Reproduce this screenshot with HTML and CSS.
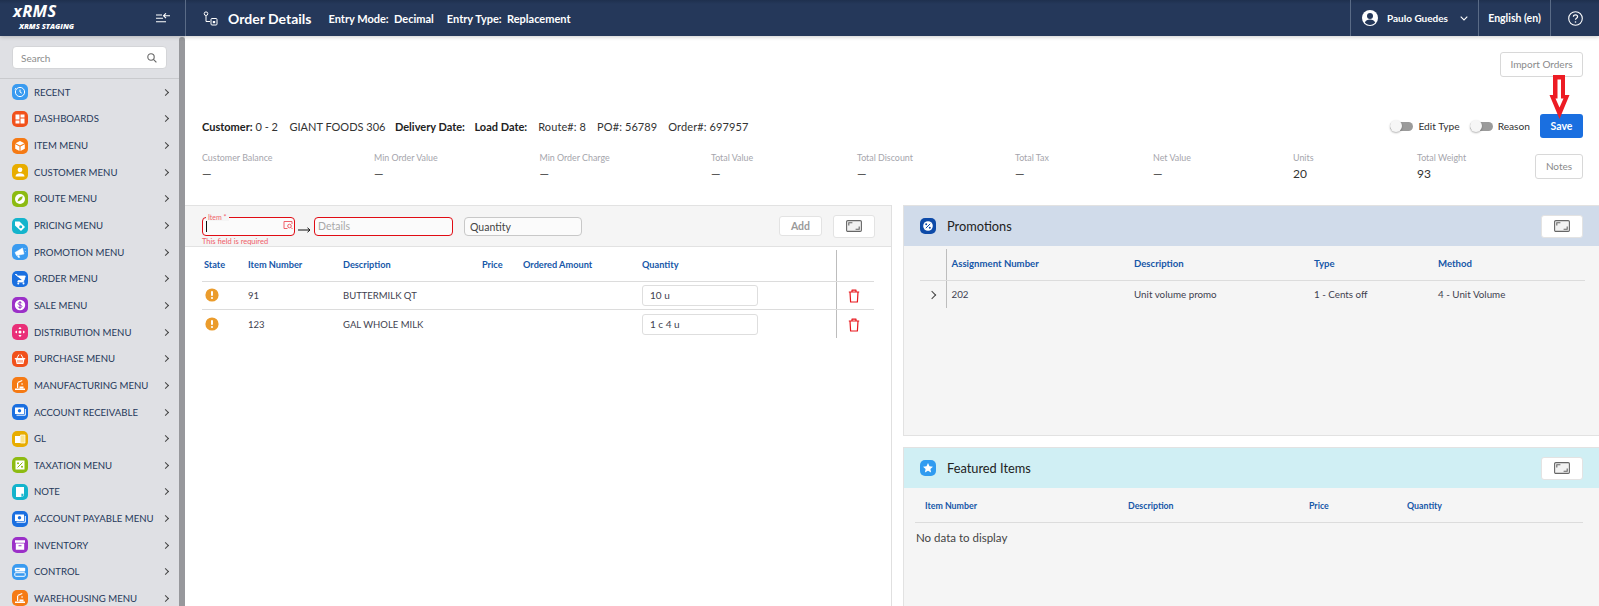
FILE: index.html
```html
<!DOCTYPE html>
<html lang="en">
<head>
<meta charset="utf-8">
<title>Order Details</title>
<link rel="stylesheet" href="styles.css">
</head>
<body>
<svg class="defs" width="0" height="0" aria-hidden="true">
  <symbol id="i-clock" viewBox="0 0 16 16"><circle cx="8" cy="8" r="4.6" fill="none" stroke="#fff" stroke-width="1"/><path d="M8 5.6V8l1.8 1.2M3 5.5 4 4" fill="none" stroke="#fff" stroke-width="1"/></symbol>
  <symbol id="i-dash" viewBox="0 0 16 16"><path d="M3.5 3.5h4v5h-4zM8.500 3.500h4v3h-4zM8.500 7.500h4v5h-4zM3.500 9.500h4v3h-4z" fill="#fff"/></symbol>
  <symbol id="i-box" viewBox="0 0 16 16"><path d="M8 3l4.500 2.300L8 7.600 3.500 5.300zM3.200 6.200l4.300 2.200V13l-4.300-2.300zM12.800 6.200 8.500 8.400V13l4.300-2.300z" fill="#fff"/></symbol>
  <symbol id="i-user" viewBox="0 0 16 16"><circle cx="8" cy="5.800" r="2.400" fill="#fff"/><path d="M3.500 12.500c0-2.400 2-3.300 4.500-3.300s4.500.9 4.500 3.300z" fill="#fff"/></symbol>
  <symbol id="i-route" viewBox="0 0 16 16"><circle cx="8" cy="8" r="5" fill="#fff"/><path d="M5.500 10.500C6 7 8 5.700 10.700 5.300 10.400 8 9 10 5.500 10.500z" fill="#8dbb12"/></symbol>
  <symbol id="i-tag" viewBox="0 0 16 16"><path d="M3 3.500h4.500l5.500 5.500-4 4-6-5.500z" fill="#fff"/><circle cx="8.700" cy="8.800" r="1.500" fill="#14b4cc"/></symbol>
  <symbol id="i-horn" viewBox="0 0 16 16"><path d="M3 8.500 10.500 4l1.500 6-7.500 1.500zM5.500 12l1.500-.5.7 2H6.300zM12.500 5l1-1M13 7.500h1" fill="#fff" stroke="#fff" stroke-width=".5"/></symbol>
  <symbol id="i-cart" viewBox="0 0 16 16"><path d="M3 3.500h1.800l.5 1.500h8l-1.300 4.500H6.200L5.700 11h6.600" fill="#fff" stroke="#fff" stroke-width=".8"/><circle cx="6.300" cy="12.600" r="1" fill="#fff"/><circle cx="11.500" cy="12.600" r="1" fill="#fff"/></symbol>
  <symbol id="i-dist" viewBox="0 0 16 16"><circle cx="8" cy="8" r="1.500" fill="#fff"/><path d="M8 2.800 9.600 5H6.400zM8 13.200 6.400 11h3.200zM2.800 8 5 6.400v3.200zM13.200 8 11 9.600V6.400z" fill="#fff"/></symbol>
  <symbol id="i-basket" viewBox="0 0 16 16"><path d="M2.800 7h10.400v1.300h-.8l-1 4.700H4.600l-1-4.700h-.8z" fill="#fff"/><path d="M5 7l2-3.500M11 7 9 3.500" stroke="#fff" stroke-width="1" fill="none"/><path d="M6 9v2.700M8 9v2.700M10 9v2.700" stroke="#f1511b" stroke-width=".8"/></symbol>
  <symbol id="i-mfg" viewBox="0 0 16 16"><path d="M3 13v-1.600h10V13zM5 11V6h1.200v5zM5.300 5 10 3l.5 1-4.600 2zM10 4.200v2.300M9.200 6.500h1.800v1H9.200z" fill="#fff"/><path d="M7.500 9.500h4v1.900h-4z" fill="#fff"/></symbol>
  <symbol id="i-bill" viewBox="0 0 16 16"><path d="M3 3.500h9v6.500H3z" fill="#fff"/><circle cx="7.500" cy="6.700" r="1.700" fill="#1a6fe0"/><path d="M13.300 5v6.200H4.500" fill="none" stroke="#fff"/></symbol>
  <symbol id="i-book" viewBox="0 0 16 16"><path d="M3 5h5v7H3z" fill="#fff"/><path d="M8.500 4h4.500v8H8.500z" fill="#fbe58c" stroke="#fff" stroke-width=".7"/></symbol>
  <symbol id="i-note" viewBox="0 0 16 16"><path d="M4 3h8v6.500L9 13H4z" fill="#fff"/><circle cx="10.300" cy="11" r="1.400" fill="#14b4cc" stroke="#fff" stroke-width=".5"/></symbol>
  <symbol id="i-inv" viewBox="0 0 16 16"><path d="M3 3.300h10v2.400H3zM3.800 6.500h8.400v6.200H3.800z" fill="#fff"/><path d="M6.500 8.200h3v1h-3z" fill="#9b30c8"/></symbol>
  <symbol id="i-ctrl" viewBox="0 0 16 16"><rect x="2.800" y="3.800" width="10.400" height="3.600" rx="1" fill="#fff"/><rect x="2.800" y="8.700" width="10.400" height="3.600" rx="1" fill="none" stroke="#fff"/><path d="M4.500 5.600h3" stroke="#3a9bf0"/></symbol>
  <symbol id="i-expand" viewBox="0 0 16 12"><rect x=".6" y=".6" width="14.800" height="10.800" rx="1.200" fill="#f2f2f2" stroke="#666" stroke-width="1.100"/><path d="M2.800 5.600V2.800h3.600M13.200 6.400v2.800H9.600" fill="none" stroke="#666" stroke-width="1.100"/></symbol>
  <symbol id="i-trash" viewBox="0 0 12 14"><path d="M.8 3h10.400M4 3V1.200h4V3M2 3l.6 10h6.800L10 3" fill="none" stroke="#e8161c" stroke-width="1.200" stroke-linejoin="round"/></symbol>
  <symbol id="i-warn" viewBox="0 0 14 14"><circle cx="7" cy="7" r="6.600" fill="#eb9c2c"/><rect x="6" y="3" width="2" height="5" rx=".9" fill="#fff"/><circle cx="7" cy="10" r="1.100" fill="#fff"/></symbol>
</svg>

<div class="app">
  <header class="topbar">
    <div class="brand">
      <div class="brand-text">
        <span class="brand-name">xRMS</span>
        <span class="brand-sub">XRMS STAGING</span>
      </div>
      <svg class="collapse" width="16" height="10" viewBox="0 0 16 10"><path d="M1 2h6M1 5.300h7M1 8.700h10M15 2.700H8.500M11 .3 8.500 2.700 11 5.100" fill="none" stroke="#fff" stroke-width="1.100"/></svg>
    </div>
    <div class="title-area">
      <svg class="order-icon" width="15" height="15" viewBox="0 0 15 15"><circle cx="3" cy="2.700" r="1.800" fill="none" stroke="#fff"/><path d="M3 4.800v5.700h4" fill="none" stroke="#fff"/><rect x="8" y="7.500" width="6" height="6.500" rx="1" fill="none" stroke="#fff"/><path d="M9.800 10h2.400v2.200H9.800z" fill="#fff"/></svg>
      <h1 class="page-title">Order Details</h1>
      <span class="entry">Entry Mode: &nbsp;Decimal</span>
      <span class="entry">Entry Type: &nbsp;Replacement</span>
    </div>
    <div class="user">
      <svg width="16" height="16" viewBox="0 0 16 16"><circle cx="8" cy="8" r="8" fill="#fff"/><circle cx="8" cy="6" r="3" fill="#25385a"/><path d="M2.800 12.500c.8-2 2.800-3 5.200-3s4.400 1 5.200 3C12 14 10 15 8 15s-4-1-5.200-2.500z" fill="#25385a"/></svg>
      <span class="user-name">Paulo Guedes</span>
      <svg width="8" height="5" viewBox="0 0 8 5"><path d="M.7.700 4 4l3.300-3.300" fill="none" stroke="#fff" stroke-width="1.100"/></svg>
    </div>
    <div class="lang">English (en)</div>
    <div class="help">
      <svg width="15" height="15" viewBox="0 0 15 15"><circle cx="7.500" cy="7.500" r="6.800" fill="none" stroke="#fff" stroke-width="1.100"/><path d="M5.400 5.800c0-1.300 1-2 2.100-2s2.100.8 2.100 1.900c0 1.600-2.100 1.600-2.100 3.100" fill="none" stroke="#fff" stroke-width="1.200"/><circle cx="7.500" cy="11" r=".8" fill="#fff"/></svg>
    </div>
  </header>

  <div class="workspace">
    <aside class="sidebar">
      <div class="side-inner">
        <div class="search-wrap">
          <div class="search">
            <span class="search-text">Search</span>
            <svg width="10" height="10" viewBox="0 0 10 10"><circle cx="4" cy="4" r="3.200" fill="none" stroke="#666" stroke-width="1.100"/><path d="m6.400 6.400 3 3" stroke="#666" stroke-width="1.200"/></svg>
          </div>
        </div>
        <nav class="menu">
          <a class="menu-item"><svg class="mi c-blue"><use href="#i-clock"/></svg><span class="ml">RECENT</span><span class="chev"></span></a>
          <a class="menu-item"><svg class="mi c-red"><use href="#i-dash"/></svg><span class="ml">DASHBOARDS</span><span class="chev"></span></a>
          <a class="menu-item"><svg class="mi c-orange"><use href="#i-box"/></svg><span class="ml">ITEM MENU</span><span class="chev"></span></a>
          <a class="menu-item"><svg class="mi c-amber"><use href="#i-user"/></svg><span class="ml">CUSTOMER MENU</span><span class="chev"></span></a>
          <a class="menu-item"><svg class="mi c-lime"><use href="#i-route"/></svg><span class="ml">ROUTE MENU</span><span class="chev"></span></a>
          <a class="menu-item"><svg class="mi c-cyan"><use href="#i-tag"/></svg><span class="ml">PRICING MENU</span><span class="chev"></span></a>
          <a class="menu-item"><svg class="mi c-blue"><use href="#i-horn"/></svg><span class="ml">PROMOTION MENU</span><span class="chev"></span></a>
          <a class="menu-item"><svg class="mi c-royal"><use href="#i-cart"/></svg><span class="ml">ORDER MENU</span><span class="chev"></span></a>
          <a class="menu-item"><svg class="mi c-purple" viewBox="0 0 16 16"><circle cx="8" cy="8" r="5.200" fill="#fff"/><path d="M9.800 6.300C9.500 5.500 8.800 5.200 8 5.200c-1 0-1.800.5-1.800 1.400 0 1.900 3.700 1 3.700 2.800 0 .9-.9 1.400-1.900 1.400s-1.700-.4-2-1.200M8 4.200v7.600" fill="none" stroke="#9b30c8"/></svg><span class="ml">SALE MENU</span><span class="chev"></span></a>
          <a class="menu-item"><svg class="mi c-pink"><use href="#i-dist"/></svg><span class="ml">DISTRIBUTION MENU</span><span class="chev"></span></a>
          <a class="menu-item"><svg class="mi c-red"><use href="#i-basket"/></svg><span class="ml">PURCHASE MENU</span><span class="chev"></span></a>
          <a class="menu-item"><svg class="mi c-orange"><use href="#i-mfg"/></svg><span class="ml">MANUFACTURING MENU</span><span class="chev"></span></a>
          <a class="menu-item"><svg class="mi c-royal"><use href="#i-bill"/></svg><span class="ml">ACCOUNT RECEIVABLE</span><span class="chev"></span></a>
          <a class="menu-item"><svg class="mi c-amber"><use href="#i-book"/></svg><span class="ml">GL</span><span class="chev"></span></a>
          <a class="menu-item"><svg class="mi c-lime" viewBox="0 0 16 16"><path d="M3.500 3.500h9v9h-9z" fill="#fff"/><path d="M5.500 10.500l5-5" stroke="#8dbb12"/><circle cx="6" cy="6.200" r="1" fill="#8dbb12"/><circle cx="10" cy="9.800" r="1" fill="#8dbb12"/></svg><span class="ml">TAXATION MENU</span><span class="chev"></span></a>
          <a class="menu-item"><svg class="mi c-cyan"><use href="#i-note"/></svg><span class="ml">NOTE</span><span class="chev"></span></a>
          <a class="menu-item"><svg class="mi c-royal"><use href="#i-bill"/></svg><span class="ml">ACCOUNT PAYABLE MENU</span><span class="chev"></span></a>
          <a class="menu-item"><svg class="mi c-purple"><use href="#i-inv"/></svg><span class="ml">INVENTORY</span><span class="chev"></span></a>
          <a class="menu-item"><svg class="mi c-blue"><use href="#i-ctrl"/></svg><span class="ml">CONTROL</span><span class="chev"></span></a>
          <a class="menu-item"><svg class="mi c-orange"><use href="#i-mfg"/></svg><span class="ml">WAREHOUSING MENU</span><span class="chev"></span></a>
        </nav>
      </div>
      <div class="scrollbar"></div>
    </aside>

    <main class="main">
      <div class="actions"><button class="btn btn-import">Import Orders</button></div>

      <div class="info-row">
        <div class="info">
          <span><b>Customer:</b> 0 - 2</span>
          <span>GIANT FOODS 306</span>
          <span><b>Delivery Date:</b></span>
          <span><b>Load Date:</b></span>
          <span>Route#: 8</span>
          <span>PO#: 56789</span>
          <span>Order#: 697957</span>
        </div>
        <div class="controls">
          <span class="toggle"><i class="track"></i>Edit Type</span>
          <span class="toggle"><i class="track"></i>Reason</span>
          <button class="btn-save">Save</button>
        </div>
      </div>

      <div class="stats">
        <div class="stat"><span class="sl">Customer Balance</span><span class="sv">—</span></div>
        <div class="stat"><span class="sl">Min Order Value</span><span class="sv">—</span></div>
        <div class="stat"><span class="sl">Min Order Charge</span><span class="sv">—</span></div>
        <div class="stat"><span class="sl">Total Value</span><span class="sv">—</span></div>
        <div class="stat"><span class="sl">Total Discount</span><span class="sv">—</span></div>
        <div class="stat"><span class="sl">Total Tax</span><span class="sv">—</span></div>
        <div class="stat"><span class="sl">Net Value</span><span class="sv">—</span></div>
        <div class="stat"><span class="sl">Units</span><span class="sv">20</span></div>
        <div class="stat"><span class="sl">Total Weight</span><span class="sv">93</span></div>
        <button class="btn btn-notes">Notes</button>
      </div>

      <div class="panels">
        <section class="left">
          <div class="entry-bar">
            <div class="field-item">
              <div class="input-red item-input"><span class="caret"></span>
                <svg class="lookup" width="10" height="10" viewBox="0 0 10 10"><path d="M9 4V1.500H1v7h3.500" fill="none" stroke="#f0606a"/><circle cx="6.500" cy="6" r="1.800" fill="none" stroke="#f0606a"/><path d="m8 7.500 1.500 1.500" stroke="#f0606a"/></svg>
              </div>
              <span class="float-label">Item *</span>
              <span class="err">This field is required</span>
            </div>
            <svg class="arrow" width="13" height="6" viewBox="0 0 13 6"><path d="M0 3h12M9.500.8 12 3 9.500 5.200" fill="none" stroke="#111"/></svg>
            <div class="input-red details-input">Details</div>
            <div class="qty-input">Quantity</div>
            <span class="spacer"></span>
            <button class="btn-add">Add</button>
            <button class="btn-expand"><svg width="16" height="12"><use href="#i-expand"/></svg></button>
          </div>
          <table class="tbl order-tbl">
            <colgroup><col class="c1"><col class="c2"><col class="c3"><col class="c4"><col class="c5"><col class="c6"><col class="c7"></colgroup>
            <thead><tr><th>State</th><th>Item Number</th><th>Description</th><th>Price</th><th>Ordered Amount</th><th>Quantity</th><th class="vl"></th></tr></thead>
            <tbody>
              <tr><td><svg class="warn"><use href="#i-warn"/></svg></td><td>91</td><td>BUTTERMILK QT</td><td></td><td></td><td><span class="qty-cell">10 u</span></td><td class="vl act"><svg class="trash"><use href="#i-trash"/></svg></td></tr>
              <tr><td><svg class="warn"><use href="#i-warn"/></svg></td><td>123</td><td>GAL WHOLE MILK</td><td></td><td></td><td><span class="qty-cell">1 c 4 u</span></td><td class="vl act"><svg class="trash"><use href="#i-trash"/></svg></td></tr>
            </tbody>
          </table>
        </section>

        <section class="right">
          <div class="card promos">
            <div class="card-head head-promo">
              <svg class="card-icon" width="16" height="16" viewBox="0 0 16 16"><rect width="16" height="16" rx="5" fill="#0d4aa8"/><circle cx="8" cy="8" r="4.800" fill="#fff"/><path d="M5.800 10.200l4.400-4.400" stroke="#0d4aa8"/><circle cx="6.200" cy="6.300" r="1" fill="#0d4aa8"/><circle cx="9.800" cy="9.700" r="1" fill="#0d4aa8"/></svg>
              <h2>Promotions</h2>
              <button class="btn-expand"><svg width="16" height="12"><use href="#i-expand"/></svg></button>
            </div>
            <table class="tbl promo-tbl">
              <colgroup><col class="p0"><col class="p1"><col class="p2"><col class="p3"><col class="p4"></colgroup>
              <thead><tr><th></th><th class="vl-left">Assignment Number</th><th>Description</th><th>Type</th><th>Method</th></tr></thead>
              <tbody><tr><td class="exp"><span class="chev dark"></span></td><td class="vl-left">202</td><td>Unit volume promo</td><td>1 - Cents off</td><td>4 - Unit Volume</td></tr></tbody>
            </table>
          </div>
          <div class="card featured">
            <div class="card-head head-feat">
              <svg class="card-icon" width="16" height="16" viewBox="0 0 16 16"><rect width="16" height="16" rx="5" fill="#2f9bf0"/><path d="m8 3 1.500 3.300 3.500.4-2.600 2.400.7 3.500L8 10.800l-3.100 1.800.7-3.500L3 6.700l3.500-.4z" fill="#fff"/></svg>
              <h2>Featured Items</h2>
              <button class="btn-expand"><svg width="16" height="12"><use href="#i-expand"/></svg></button>
            </div>
            <table class="tbl feat-tbl">
              <colgroup><col class="f1"><col class="f2"><col class="f3"><col class="f4"></colgroup>
              <thead><tr><th>Item Number</th><th>Description</th><th>Price</th><th>Quantity</th></tr></thead>
            </table>
            <p class="nodata">No data to display</p>
          </div>
        </section>
      </div>

      <svg class="red-arrow" width="21" height="46" viewBox="0 0 21 46"><path d="M4 1h12v20h4.500L10.500 45 .5 21H4z" fill="#ed1c24"/><path d="M8.500 5.500h3.500v19h2.500l-4 9-4-9h2z" fill="#fff"/></svg>
    </main>
  </div>
</div>
</body>
</html>
```
FILE: styles.css
```css
* { box-sizing: border-box; }
html, body { margin: 0; height: 100%; overflow: hidden; }
body { font-family: Lato, "Open Sans", sans-serif; font-size: 11px; color: #333; background: #fff; }
.defs { position: absolute; }
button { font-family: inherit; cursor: pointer; }
.app { display: flex; flex-direction: column; height: 606px; }

.topbar { height: 36px; flex: none; display: flex; align-items: stretch; background: linear-gradient(#1f304e, #25385a 4px); color: #fff; box-shadow: 0 1px 4px rgba(0,0,0,.2); position: relative; z-index: 2; }
.brand { width: 186px; flex: none; display: flex; align-items: center; border-right: 1px solid #5a6b86; }
.brand-text { display: flex; flex-direction: column; padding-left: 13px; width: 155px; font-style: italic; font-weight: 700; font-family: "Open Sans", sans-serif; }
.brand-name { font-size: 16.500px; line-height: 16px; margin-top: -2px; letter-spacing: .4px; }
.brand-sub { font-size: 7.500px; line-height: 9px; margin-top: 3px; padding-left: 6px; font-weight: 800; }
.title-area { flex: 1; display: flex; align-items: center; padding-left: 17px; }
.order-icon { margin-right: 10px; }
.page-title { margin: 0 17px 0 0; font-size: 14px; font-weight: 700; white-space: nowrap; }
.entry { font-size: 11px; font-weight: 700; margin-right: 13px; white-space: nowrap; }
.user { width: 128px; display: flex; align-items: center; padding-left: 11px; border-left: 1px solid #5a6b86; }
.user-name { font-size: 10px; font-weight: 700; margin: 0 12px 0 9px; white-space: nowrap; }
.lang { width: 72px; display: flex; align-items: center; justify-content: center; font-size: 10.500px; font-weight: 700; border-left: 1px solid #5a6b86; white-space: nowrap; }
.help { width: 49px; display: flex; align-items: center; justify-content: center; border-left: 1px solid #5a6b86; }

.workspace { flex: 1; display: flex; min-height: 0; }
.sidebar { width: 185px; flex: none; display: flex; background: #dfe0e4; overflow: hidden; }
.side-inner { width: 179px; flex: none; }
.scrollbar { width: 6px; background: #97989c; border-radius: 4px 4px 0 0; margin-top: 1px; }
.search-wrap { height: 43px; padding: 10px 0 0 12px; border-bottom: 1px solid #c9cacd; }
.search { width: 155px; height: 23px; display: flex; align-items: center; justify-content: space-between; padding: 0 9px 0 8px; background: #fff; border: 1px solid #d4d5d8; border-radius: 4px; }
.search-text { color: #8c8c8c; font-size: 10px; }
.menu { display: flex; flex-direction: column; }
.menu-item { height: 26.650px; flex: none; display: flex; align-items: center; padding-left: 12px; color: #25385a; font-size: 9.600px; }
.mi { width: 16px; height: 16px; border-radius: 5px; flex: none; }
.ml { flex: 1; margin-left: 6px; white-space: nowrap; }
.chev { width: 5px; height: 5px; border-top: 1.300px solid #444; border-right: 1.300px solid #444; transform: rotate(45deg); margin-right: 11px; flex: none; display: inline-block; }
.chev.dark { width: 6px; height: 6px; margin: 0; }
.c-blue { background: #3a9bf0; }
.c-red { background: #f1511b; }
.c-orange { background: #f57a14; }
.c-amber { background: #e8ad00; }
.c-lime { background: #8dbb12; }
.c-cyan { background: #14b4cc; }
.c-royal { background: #1a6fe0; }
.c-purple { background: #9b30c8; }
.c-pink { background: #e92f78; }

.main { flex: 1; min-width: 0; position: relative; display: flex; flex-direction: column; }
.btn { background: #fff; border: 1px solid #d8d8d8; border-radius: 3px; color: #8a8a8a; font-size: 10px; padding: 0 0 2px; }
.actions { display: flex; justify-content: flex-end; padding: 16px 16px 0 0; }
.btn-import { width: 83px; height: 25px; }
.info-row { display: flex; align-items: center; justify-content: space-between; padding: 37px 16px 0 17px; }
.info { display: flex; gap: 9.500px; font-size: 11px; color: #333; white-space: nowrap; }
.info b { font-weight: 700; color: #222; }
.info span:nth-child(2) { margin-left: 2px; }
.info span:nth-child(n+5) { margin-left: 1.500px; letter-spacing: .1px; }
.controls { display: flex; align-items: center; }
.toggle { display: flex; align-items: center; font-size: 10.200px; margin-right: 10px; color: #333; white-space: nowrap; }
.track { position: relative; display: block; width: 23px; height: 9px; margin-right: 5px; background: #9b9b9b; border-radius: 5px; }
.track::before { content: ""; position: absolute; left: 0; top: -2px; width: 12px; height: 12px; border-radius: 50%; background: #f6f6f6; box-shadow: 0 1px 2px rgba(0,0,0,.3); }
.btn-save { width: 43px; height: 24px; border: 0; border-radius: 3px; background: #1a6fe0; color: #fff; font-size: 10.500px; font-weight: 700; }

.stats { display: grid; grid-template-columns: 172px 165.500px 171.500px 146px 158px 138px 140px 124px 118px 48px; padding: 13px 16px 0 17px; height: 67px; align-items: start; }
.stat { display: flex; flex-direction: column; }
.sl { color: #a5a5ac; font-size: 8.900px; line-height: 13px; white-space: nowrap; }
.sv { font-size: 12px; line-height: 15px; margin-top: 2px; color: #333; }
.btn-notes { width: 48px; height: 25px; margin-top: 3px; }

.panels { flex: 1; min-height: 0; display: flex; gap: 11px; }
.left { width: 707px; flex: none; border-right: 1px solid #e0e0e0; }
.entry-bar { height: 42px; display: flex; align-items: center; padding: 0 16px 0 17px; background: #f5f5f5; border-top: 1px solid #e2e2e2; border-bottom: 1px solid #e2e2e2; }
.field-item { position: relative; width: 93px; }
.input-red { height: 19px; border: 1.400px solid #e00c14; border-radius: 4px; background: #fbfbfb; display: flex; align-items: center; }
.item-input { justify-content: space-between; padding: 0 1px 0 3px; }
.caret { width: 1px; height: 11px; background: #111; }
.lookup { margin-top: -3px; }
.float-label { position: absolute; left: 4px; top: -4px; padding: 0 2px; background: #f5f5f5; color: #f0606a; font-size: 7px; line-height: 8px; }
.err { position: absolute; left: 0; top: 20px; color: #f0606a; font-size: 7.500px; line-height: 10px; white-space: nowrap; }
.arrow { margin: 8px 3px 0; flex: none; }
.details-input { width: 139px; padding-left: 3px; color: #a8a8a8; font-size: 10.500px; }
.qty-input { width: 118px; height: 19px; margin-left: 11px; display: flex; align-items: center; padding: 2px 0 0 5px; background: #fbfbfb; border: 1px solid #c8c8c8; border-radius: 4px; font-size: 10.500px; color: #444; }
.spacer { flex: 1; }
.btn-add { width: 43px; height: 20px; border: 1px solid #e3e3e3; border-radius: 3px; background: #fff; color: #9a9a9a; font-size: 10.500px; font-weight: 700; }
.btn-expand { width: 42px; height: 23px; display: flex; align-items: center; justify-content: center; padding: 0; border: 1px solid #e3e3e3; border-radius: 3px; background: #fff; margin-left: 11px; }

.tbl { border-collapse: collapse; table-layout: fixed; }
.tbl th { height: 31px; padding: 0 0 2px 2px; text-align: left; font-size: 9.200px; font-weight: 700; color: #1657a8; border-bottom: 1px solid #dcdcdc; white-space: nowrap; }
.tbl td { padding: 0 0 0 2px; font-size: 9.800px; color: #3f3f4f; white-space: nowrap; }
.order-tbl { width: 672px; margin: 3px 0 0 17px; }
.order-tbl td { height: 28.500px; font-size: 9.500px; border-bottom: 1px solid #dcdcdc; }
.order-tbl tbody tr:last-child td { border-bottom: 0; }
.c1 { width: 44px; } .c2 { width: 95px; } .c3 { width: 139px; } .c4 { width: 41px; } .c5 { width: 119px; } .c6 { width: 196px; } .c7 { width: 38px; }
.tbl .vl { border-left: 1px solid #bdbdbd; }
.act { padding-left: 11px !important; }
.warn { width: 14px; height: 14px; display: block; margin-left: 1px; }
.trash { width: 12px; height: 14px; display: block; margin-top: 1px; }
.tbl .qty-cell { display: block; width: 116px; height: 21px; line-height: 19px; padding-left: 7px; border: 1px solid #dedede; border-radius: 3px; background: #fff; font-size: 10px; }

.right { flex: 1; min-width: 0; display: flex; flex-direction: column; gap: 11px; }
.card { background: #f5f5f5; border: 1px solid #e2e2e2; border-right: 0; }
.promos { height: 231px; flex: none; }
.featured { flex: 1; border-bottom: 0; }
.card-head { height: 40px; display: flex; align-items: center; padding: 0 16px 0 16px; }
.card-head h2 { flex: 1; margin: 0 0 0 11px; font-size: 12.800px; font-weight: 400; color: #222; }
.head-promo { background: #d0dbea; }
.head-feat { background: #d0eff4; }
.promo-tbl { width: 665px; margin: 3px 0 0 16px; }
.promo-tbl th { font-size: 9.600px; }
.promo-tbl td { height: 28px; }
.p0 { width: 26px; } .p1 { width: 186px; } .p2 { width: 180px; } .p3 { width: 124px; } .p4 { width: 149px; }
.tbl .vl-left { border-left: 1px solid #bdbdbd; padding-left: 5px; }
.tbl .exp { text-align: left; padding-left: 9px; }
.feat-tbl { width: 668px; margin: 3px 0 0 11px; }
.feat-tbl th { padding-left: 10px; font-size: 8.800px; }
.f1 { width: 203px; } .f2 { width: 181px; } .f3 { width: 98px; } .f4 { width: 186px; }
.nodata { margin: 8px 0 0 12px; font-size: 11.500px; color: #444; }

.red-arrow { position: absolute; left: 1364px; top: 38px; z-index: 3; }
```
